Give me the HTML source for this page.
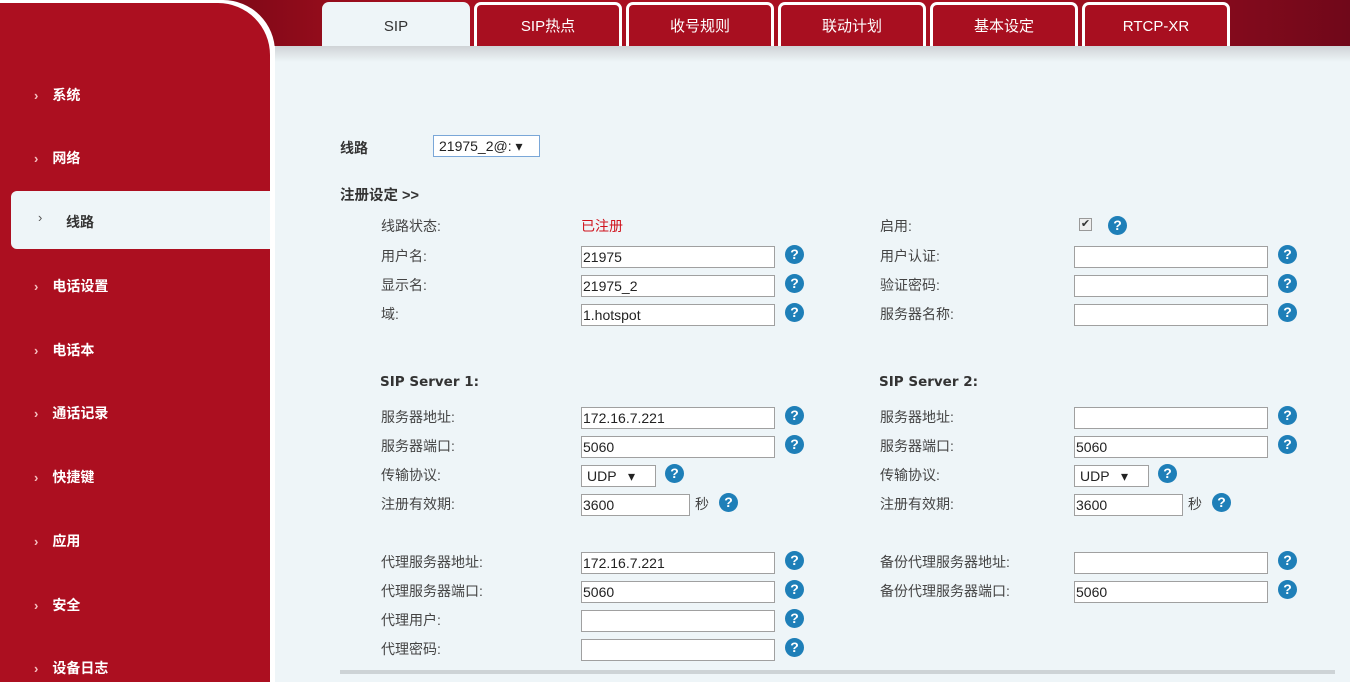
<!DOCTYPE html>
<html><head><meta charset="utf-8"><style>
*{margin:0;padding:0;box-sizing:border-box}
html,body{width:1350px;height:682px;overflow:hidden}
body{position:relative;background:#fff;font-family:"Liberation Sans","Noto Sans CJK SC",sans-serif;font-size:14px;color:#333}
.a{position:absolute}
#topbar{left:200px;top:0;width:1150px;height:46px;background:linear-gradient(90deg,#7a0816,#a80f20 20%,#a80f20 70%,#70081a)}
#side{left:0;top:3px;width:270px;height:679px;background:#ac0f20;border-top-right-radius:52px;box-shadow:0 -3px 0 #fff,5px 0 0 #fff,5px -3px 0 #fff}
#content{left:275px;top:46px;width:1075px;height:636px;background:#eef5f8}
#shadow{left:275px;top:46px;width:1075px;height:16px;background:linear-gradient(#cfd3d6,#eef5f8)}
.tab{position:absolute;top:2px;width:148px;height:44px;border:3px solid #fff;border-bottom:none;border-radius:7px 7px 0 0;background:#a80f20;color:#fff;text-align:center;line-height:44px;font-size:15px}
.tab.act{background:#eef5f8;color:#333;border-color:#eef5f8}
.nav{position:absolute;left:34px;color:#fff;font-weight:bold;font-size:14px}
.nav:before{content:"›";font-size:13px;margin-right:14px;color:#f4c0c0}
#navact{left:11px;top:191px;width:259px;height:58px;background:#eef5f8;border-radius:6px 0 0 6px}
.l{position:absolute;font-size:14px;color:#444;line-height:18px}
.in{position:absolute;width:194px;height:22px;background:#fff;border:1px solid #a0a0a0;font-size:14px;line-height:20px;padding-left:1px;color:#222}
.q{position:absolute;width:19px;height:19px;border-radius:50%;background:#1e7fb8;color:#fff;font-weight:bold;font-size:14px;line-height:19px;text-align:center}
.sel{position:absolute;height:22px;background:#fff;border:1px solid #a0a0a0;font-size:14px;line-height:20px;padding-left:5px;color:#222}
.h{position:absolute;font-weight:bold;font-size:14px;color:#333}
.sv{position:absolute;font-family:"DejaVu Sans",sans-serif;font-weight:bold;font-size:13.5px;color:#333}
</style></head><body>
<div class="a" id="topbar"></div>
<div class="a" id="content"></div>
<div class="a" id="shadow"></div>
<div class="a" id="side"></div>
<div class="tab act" style="left:322px">SIP</div>
<div class="tab" style="left:474px">SIP热点</div>
<div class="tab" style="left:626px">收号规则</div>
<div class="tab" style="left:778px">联动计划</div>
<div class="tab" style="left:930px">基本设定</div>
<div class="tab" style="left:1082px">RTCP-XR</div>
<div class="a" id="navact"></div>
<div class="nav" style="top:85px">系统</div>
<div class="nav" style="top:148px">网络</div>
<div class="a" style="left:38px;top:210px;color:#555;font-size:13px">›</div>
<div class="a" style="left:66px;top:212px;color:#333;font-size:14px;font-weight:bold">线路</div>
<div class="nav" style="top:276px">电话设置</div>
<div class="nav" style="top:340px">电话本</div>
<div class="nav" style="top:403px">通话记录</div>
<div class="nav" style="top:467px">快捷键</div>
<div class="nav" style="top:531px">应用</div>
<div class="nav" style="top:595px">安全</div>
<div class="nav" style="top:658px">设备日志</div>

<div class="h" style="left:340px;top:138px">线路</div>
<div class="sel" style="left:433px;top:135px;width:107px;border-color:#7aa7d8">21975_2@: ▾</div>
<div class="h" style="left:340px;top:184px;font-size:14.5px">注册设定 &gt;&gt;</div>

<div class="l" style="left:381px;top:217px">线路状态:</div>
<div class="l" style="left:581px;top:217px;color:#d0141e">已注册</div>
<div class="l" style="left:880px;top:217px">启用:</div>
<div class="a" style="left:1079px;top:218px;width:13px;height:13px;border:1px solid #999;background:#eee;font-size:11px;line-height:11px;text-align:center">✔</div>
<div class="q" style="left:1108px;top:216px">?</div>

<div class="l" style="left:381px;top:247px">用户名:</div><div class="in" style="left:581px;top:246px">21975</div><div class="q" style="left:785px;top:245px">?</div>
<div class="l" style="left:880px;top:247px">用户认证:</div><div class="in" style="left:1074px;top:246px"></div><div class="q" style="left:1278px;top:245px">?</div>
<div class="l" style="left:381px;top:276px">显示名:</div><div class="in" style="left:581px;top:275px">21975_2</div><div class="q" style="left:785px;top:274px">?</div>
<div class="l" style="left:880px;top:276px">验证密码:</div><div class="in" style="left:1074px;top:275px"></div><div class="q" style="left:1278px;top:274px">?</div>
<div class="l" style="left:381px;top:305px">域:</div><div class="in" style="left:581px;top:304px">1.hotspot</div><div class="q" style="left:785px;top:303px">?</div>
<div class="l" style="left:880px;top:305px">服务器名称:</div><div class="in" style="left:1074px;top:304px"></div><div class="q" style="left:1278px;top:303px">?</div>

<div class="sv" style="left:380px;top:374px">SIP Server 1:</div>
<div class="sv" style="left:879px;top:374px">SIP Server 2:</div>

<div class="l" style="left:381px;top:408px">服务器地址:</div><div class="in" style="left:581px;top:407px">172.16.7.221</div><div class="q" style="left:785px;top:406px">?</div>
<div class="l" style="left:880px;top:408px">服务器地址:</div><div class="in" style="left:1074px;top:407px"></div><div class="q" style="left:1278px;top:406px">?</div>
<div class="l" style="left:381px;top:437px">服务器端口:</div><div class="in" style="left:581px;top:436px">5060</div><div class="q" style="left:785px;top:435px">?</div>
<div class="l" style="left:880px;top:437px">服务器端口:</div><div class="in" style="left:1074px;top:436px">5060</div><div class="q" style="left:1278px;top:435px">?</div>
<div class="l" style="left:381px;top:466px">传输协议:</div><div class="sel" style="left:581px;top:465px;width:75px">UDP &nbsp; ▾</div><div class="q" style="left:665px;top:464px">?</div>
<div class="l" style="left:880px;top:466px">传输协议:</div><div class="sel" style="left:1074px;top:465px;width:75px">UDP &nbsp; ▾</div><div class="q" style="left:1158px;top:464px">?</div>
<div class="l" style="left:381px;top:495px">注册有效期:</div><div class="in" style="left:581px;top:494px;width:109px">3600</div><div class="l" style="left:695px;top:495px">秒</div><div class="q" style="left:719px;top:493px">?</div>
<div class="l" style="left:880px;top:495px">注册有效期:</div><div class="in" style="left:1074px;top:494px;width:109px">3600</div><div class="l" style="left:1188px;top:495px">秒</div><div class="q" style="left:1212px;top:493px">?</div>

<div class="l" style="left:381px;top:553px">代理服务器地址:</div><div class="in" style="left:581px;top:552px">172.16.7.221</div><div class="q" style="left:785px;top:551px">?</div>
<div class="l" style="left:880px;top:553px">备份代理服务器地址:</div><div class="in" style="left:1074px;top:552px"></div><div class="q" style="left:1278px;top:551px">?</div>
<div class="l" style="left:381px;top:582px">代理服务器端口:</div><div class="in" style="left:581px;top:581px">5060</div><div class="q" style="left:785px;top:580px">?</div>
<div class="l" style="left:880px;top:582px">备份代理服务器端口:</div><div class="in" style="left:1074px;top:581px">5060</div><div class="q" style="left:1278px;top:580px">?</div>
<div class="l" style="left:381px;top:611px">代理用户:</div><div class="in" style="left:581px;top:610px"></div><div class="q" style="left:785px;top:609px">?</div>
<div class="l" style="left:381px;top:640px">代理密码:</div><div class="in" style="left:581px;top:639px"></div><div class="q" style="left:785px;top:638px">?</div>
<div class="a" style="left:340px;top:670px;width:995px;height:4px;background:#cdd3d6"></div>
</body></html>
